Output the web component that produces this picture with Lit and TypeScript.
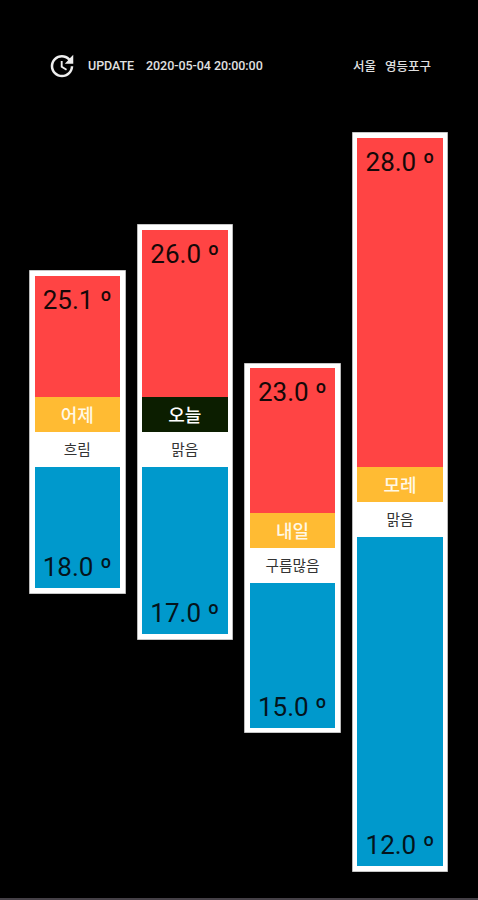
import { LitElement, html, css } from "lit";
import { customElement, property } from "lit/decorators.js";
import { classMap } from "lit/directives/class-map.js";
import { styleMap } from "lit/directives/style-map.js";

interface Forecast {
  day: string;
  sky: string;
  high: string;
  low: string;
  offset: number;
  band: number;
  today?: boolean;
}

const DAYS: Forecast[] = [
  { day: "어제", sky: "흐림", high: "25.1", low: "18.0", offset: 138, band: 121.5 },
  { day: "오늘", sky: "맑음", high: "26.0", low: "17.0", offset: 92, band: 167.5, today: true },
  { day: "내일", sky: "구름많음", high: "23.0", low: "15.0", offset: 230.5, band: 145 },
  { day: "모레", sky: "맑음", high: "28.0", low: "12.0", offset: 0, band: 329.5 },
];

@customElement("temp-bar")
class TempBar extends LitElement {
  @property({ attribute: false }) data!: Forecast;

  static styles = css`
    :host {
      display: block;
      box-sizing: border-box;
      width: 96.5px;
      padding: 5.5px;
      background: #fff;
      box-shadow: inset 0 0 0 0.6px #8c8c8c;
    }
    .band {
      display: flex;
      justify-content: center;
      font-size: 26px;
      line-height: 30px;
      color: #150808;
      white-space: pre;
      box-sizing: border-box;
    }
    .high {
      background: #ff4444;
      align-items: flex-start;
      padding-top: 9px;
    }
    .low {
      background: #0099cc;
      color: #04141c;
      align-items: flex-end;
      padding-bottom: 6px;
    }
    .day,
    .sky {
      height: 34.8px;
      line-height: 37px;
      text-align: center;
    }
    .day {
      background: #ffbb33;
      color: #fff8e6;
      font-size: 18px;
      font-weight: 500;
    }
    .today {
      background: #0c1e00;
      color: #fff;
    }
    .sky {
      color: #333;
      font-size: 14.7px;
    }
  `;

  render() {
    const d = this.data;
    const size = styleMap({ height: `${d.band}px` });
    return html`
      <div class="band high" style=${size}>${d.high} º</div>
      <div class=${classMap({ day: true, today: !!d.today })}>${d.day}</div>
      <div class="sky">${d.sky}</div>
      <div class="band low" style=${size}>${d.low} º</div>
    `;
  }
}

@customElement("app-root")
class AppRoot extends LitElement {
  static styles = css`
    :host {
      display: flex;
      flex-direction: column;
      box-sizing: border-box;
      height: 900px;
      background: #000;
      border-bottom: 2px solid #454047;
      font-family: Roboto, "Noto Sans CJK KR", sans-serif;
      overflow: hidden;
    }
    .top {
      display: flex;
      align-items: center;
      height: 132px;
      box-sizing: border-box;
      padding: 0 47px 1px;
      color: #e0e0e0;
      font-size: 12.5px;
      white-space: pre;
    }
    .icon {
      width: 30px;
      height: 30px;
      fill: #eee;
      margin-right: 11px;
    }
    .label,
    .time {
      font-weight: 500;
      letter-spacing: -0.05px;
    }
    .label {
      width: 58px;
    }
    .place {
      margin-left: auto;
      display: flex;
      gap: 9px;
      font-weight: 500;
    }
    .bars {
      display: flex;
      align-items: flex-start;
      gap: 11.1px;
      padding-left: 29px;
    }
  `;

  render() {
    return html`
      <div class="top">
        <svg class="icon" viewBox="0 0 24 24">
          <path
            d="M21 10.12h-6.78l2.74-2.82c-2.73-2.7-7.15-2.8-9.88-.1-2.73 2.71-2.73 7.08 0 9.79s7.15 2.71 9.88 0C18.32 15.65 19 14.08 19 12.1h2c0 1.98-.88 4.55-2.64 6.29-3.51 3.48-9.21 3.48-12.72 0-3.5-3.47-3.53-9.11-.02-12.58s9.14-3.47 12.65 0L21 3v7.12zM12.5 8v4.25l3.5 2.08-.72 1.21L11 13V8h1.5z"
          />
        </svg>
        <span class="label">UPDATE</span>
        <span class="time">2020-05-04 20:00:00</span>
        <div class="place"><span>서울</span><span>영등포구</span></div>
      </div>
      <div class="bars">
        ${DAYS.map(
          (d) => html`<temp-bar .data=${d} style=${styleMap({ marginTop: `${d.offset}px` })}></temp-bar>`,
        )}
      </div>
    `;
  }
}
